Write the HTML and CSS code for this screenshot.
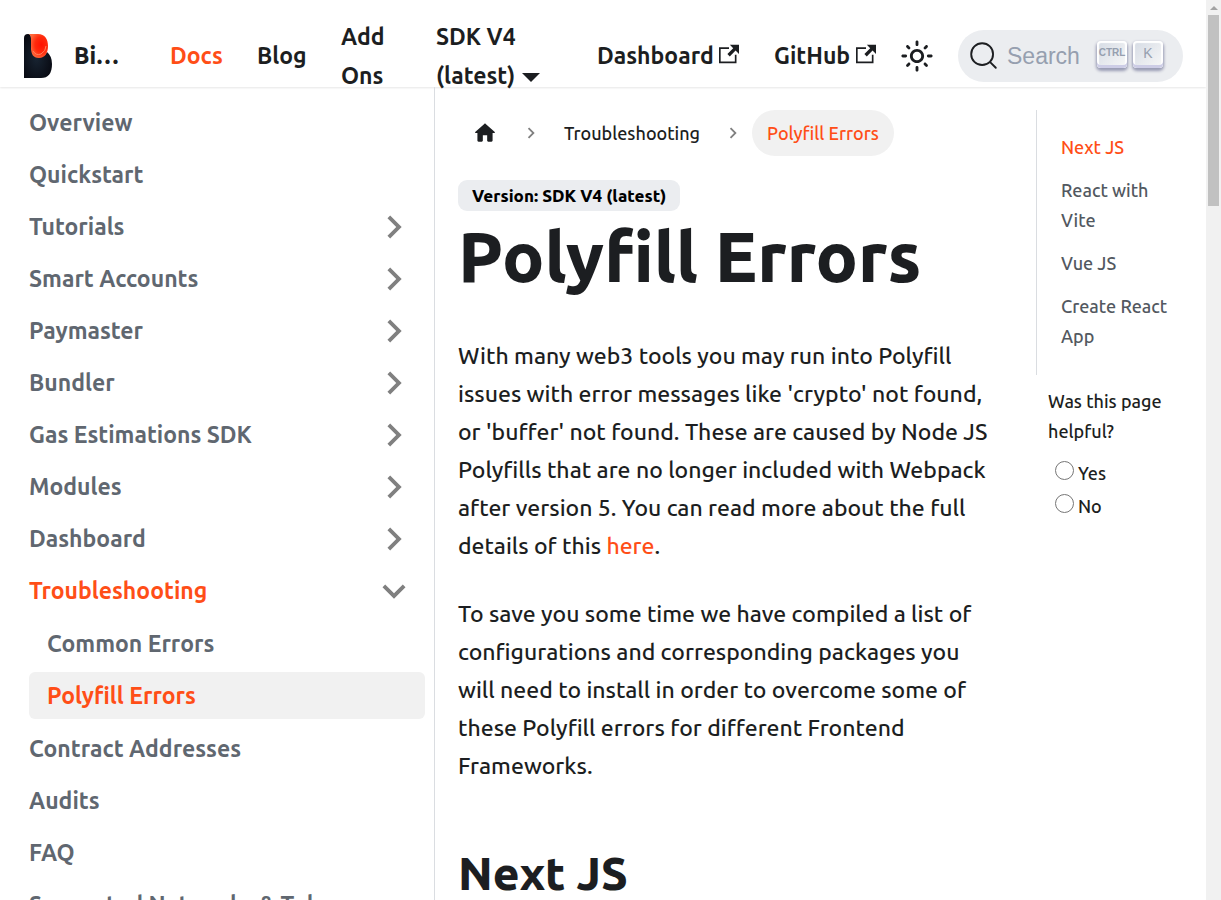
FILE: index.html
```html
<!DOCTYPE html>
<html lang="en">
<head>
<meta charset="utf-8">
<meta name="viewport" content="width=device-width, initial-scale=1">
<title>Polyfill Errors</title>
<link rel="stylesheet" href="styles.css">
</head>
<body>
<svg class="defs" aria-hidden="true">
  <symbol id="chevron" viewBox="0 0 24 24"><path d="M8.59 16.59 13.17 12 8.59 7.41 10 6l6 6-6 6z"/></symbol>
  <symbol id="external" viewBox="0 0 24 24"><path d="M21 13v10h-21v-19h12v2h-10v15h17v-8h2zm3-12h-10.988l4.035 4-6.977 7.07 2.828 2.828 6.977-7.07 4.125 4.172v-11z"/></symbol>
</svg>
<div class="page">
  <header class="navbar">
    <a class="brand" href="#">
      <svg class="logo" viewBox="0 0 28 44" aria-hidden="true">
        <defs>
          <radialGradient id="night" cx="45%" cy="55%" r="60%"><stop offset="0" stop-color="#182432"/><stop offset="1" stop-color="#080a12"/></radialGradient>
          <radialGradient id="flame" cx="65%" cy="45%" r="60%"><stop offset="0" stop-color="#ff1200"/><stop offset=".55" stop-color="#ff2a0c"/><stop offset="1" stop-color="#ff6538"/></radialGradient>
        </defs>
        <path fill="url(#night)" d="M0 44V4Q0 0 4 0q3 0 3 4v10q2 9 9 9 5-1 7-5 5 4 5 12 0 14-11 14z"/>
        <path fill="url(#flame)" d="M5 0h9c7 0 10 5 10 12s-3 12-9 12S7 20 7 13V6q0-5-2-6z"/>
        <path fill="none" stroke="#ff805c" stroke-width="1" d="M9 17q3 5 8 3 5-3 5-8"/>
      </svg>
      <b>Bi…</b>
    </a>
    <nav class="navlinks" aria-label="Main">
      <a class="docs active" href="#">Docs</a>
      <a class="blog" href="#">Blog</a>
      <a class="addons" href="#">Add Ons</a>
      <a class="sdk" href="#">SDK V4 (latest)<span class="caret"></span></a>
      <a class="dash" href="#">Dashboard <svg class="ext"><use href="#external"/></svg></a>
      <a class="github" href="#">GitHub <svg class="ext"><use href="#external"/></svg></a>
    </nav>
    <button class="theme" type="button" aria-label="Switch between dark and light mode">
      <svg viewBox="0 0 24 24"><path fill="currentColor" d="M12,9c1.65,0,3,1.35,3,3s-1.35,3-3,3s-3-1.35-3-3S10.35,9,12,9 M12,7c-2.76,0-5,2.24-5,5s2.24,5,5,5s5-2.24,5-5 S14.76,7,12,7L12,7z M2,13l2,0c0.55,0,1-0.45,1-1s-0.45-1-1-1l-2,0c-0.55,0-1,0.45-1,1S1.45,13,2,13z M20,13l2,0c0.55,0,1-0.45,1-1 s-0.45-1-1-1l-2,0c-0.55,0-1,0.45-1,1S19.45,13,20,13z M11,2v2c0,0.55,0.45,1,1,1s1-0.45,1-1V2c0-0.55-0.45-1-1-1S11,1.45,11,2z M11,20v2c0,0.55,0.45,1,1,1s1-0.45,1-1v-2c0-0.55-0.45-1-1-1C11.45,19,11,19.45,11,20z M5.99,4.58c-0.39-0.39-1.03-0.39-1.41,0 c-0.39,0.39-0.39,1.03,0,1.41l1.06,1.06c0.39,0.39,1.03,0.39,1.41,0s0.39-1.03,0-1.41L5.99,4.58z M18.36,16.95 c-0.39-0.39-1.03-0.39-1.41,0c-0.39,0.39-0.39,1.03,0,1.41l1.06,1.06c0.39,0.39,1.03,0.39,1.41,0c0.39-0.39,0.39-1.03,0-1.41 L18.36,16.95z M19.42,5.99c0.39-0.39,0.39-1.03,0-1.41c-0.39-0.39-1.03-0.39-1.41,0l-1.06,1.06c-0.39,0.39-0.39,1.03,0,1.41 s1.03,0.39,1.41,0L19.42,5.99z M7.05,18.36c0.39-0.39,0.39-1.03,0-1.41c-0.39-0.39-1.03-0.39-1.41,0l-1.06,1.06 c-0.39,0.39-0.39,1.03,0,1.41s1.03,0.39,1.41,0L7.05,18.36z"/></svg>
    </button>
    <button class="search" type="button">
      <svg viewBox="0 0 20 20" aria-hidden="true"><path d="M14.386 14.386l4.0877 4.0877-4.0877-4.0877c-2.9418 2.9419-7.7115 2.9419-10.6533 0-2.9419-2.9418-2.9419-7.7115 0-10.6533 2.9418-2.9419 7.7115-2.9419 10.6533 0 2.9419 2.9418 2.9419 7.7115 0 10.6533z" fill="none" stroke="currentColor" stroke-width="1.3" stroke-linecap="round" stroke-linejoin="round"/></svg>
      <span class="search-label">Search</span>
      <kbd class="ctrl">CTRL</kbd><kbd>K</kbd>
    </button>
  </header>
  <div class="columns">
    <nav class="sidebar" aria-label="Docs sidebar">
      <ul>
        <li><a href="#">Overview</a></li>
        <li><a href="#">Quickstart</a></li>
        <li><a href="#">Tutorials<svg><use href="#chevron"/></svg></a></li>
        <li><a href="#">Smart Accounts<svg><use href="#chevron"/></svg></a></li>
        <li><a href="#">Paymaster<svg><use href="#chevron"/></svg></a></li>
        <li><a href="#">Bundler<svg><use href="#chevron"/></svg></a></li>
        <li><a href="#">Gas Estimations SDK<svg><use href="#chevron"/></svg></a></li>
        <li><a href="#">Modules<svg><use href="#chevron"/></svg></a></li>
        <li><a href="#">Dashboard<svg><use href="#chevron"/></svg></a></li>
        <li><a class="active" href="#">Troubleshooting<svg class="open"><use href="#chevron"/></svg></a>
          <ul>
            <li><a href="#">Common Errors</a></li>
            <li><a class="active current" href="#">Polyfill Errors</a></li>
          </ul>
        </li>
        <li><a href="#">Contract Addresses</a></li>
        <li><a href="#">Audits</a></li>
        <li><a href="#">FAQ</a></li>
        <li><a href="#">Supported Networks &amp; Tokens</a></li>
      </ul>
    </nav>
    <main>
      <nav class="crumbs" aria-label="Breadcrumbs">
        <a href="#" aria-label="Home page"><svg class="home" viewBox="0 0 24 24"><path d="M10 19v-5h4v5c0 .55.45 1 1 1h3c.55 0 1-.45 1-1v-7h1.7c.46 0 .68-.57.33-.87L12.67 3.6c-.38-.34-.96-.34-1.34 0l-8.36 7.53c-.34.3-.13.87.33.87H5v7c0 .55.45 1 1 1h3c.55 0 1-.45 1-1z" fill="currentColor"/></svg></a>
        <svg class="sep"><use href="#chevron"/></svg>
        <a href="#">Troubleshooting</a>
        <svg class="sep"><use href="#chevron"/></svg>
        <span class="here">Polyfill Errors</span>
      </nav>
      <span class="badge">Version: SDK V4 (latest)</span>
      <h1>Polyfill Errors</h1>
      <p>With many web3 tools you may run into Polyfill issues with error messages like 'crypto' not found, or 'buffer' not found. These are caused by Node JS Polyfills that are no longer included with Webpack after version 5. You can read more about the full details of this <a href="#">here</a>.</p>
      <p>To save you some time we have compiled a list of configurations and corresponding packages you will need to install in order to overcome some of these Polyfill errors for different Frontend Frameworks.</p>
      <h2>Next JS</h2>
    </main>
    <aside>
      <ul class="toc">
        <li><a class="active" href="#">Next JS</a></li>
        <li><a href="#">React with Vite</a></li>
        <li><a href="#">Vue JS</a></li>
        <li><a href="#">Create React App</a></li>
      </ul>
      <fieldset class="feedback">
        <legend>Was this page helpful?</legend>
        <label><input type="radio" name="helpful">Yes</label>
        <label><input type="radio" name="helpful">No</label>
      </fieldset>
    </aside>
  </div>
</div>
<div class="scrollbar" aria-hidden="true"><span class="arrow"></span><span class="thumb"></span></div>
</body>
</html>
```
FILE: styles.css
```css
* { box-sizing: border-box; }
body {
  margin: 0;
  height: 100vh;
  display: flex;
  overflow: hidden;
  background: #fff;
  color: #1c1e21;
  font-family: Ubuntu, "Noto Sans", sans-serif;
  font-size: 23px;
  font-weight: 500;
  line-height: 38px;
}
a { color: inherit; text-decoration: none; }
ul { list-style: none; margin: 0; padding: 0; }
svg { flex: none; }
.defs { position: absolute; width: 0; height: 0; }
.active { color: #ff4e17; }

.page { flex: 1; min-width: 0; display: flex; flex-direction: column; }

.navbar {
  flex: none;
  height: 87px;
  padding: 24px 23px 0 24px;
  display: flex;
  align-items: center;
  box-shadow: 0 1px 2px rgba(0, 0, 0, .1);
  font-weight: 600;
  line-height: 39px;
}
.brand { display: flex; align-items: center; gap: 22px; width: 146px; flex: none; }
.brand b { font-weight: 800; }
.logo { width: 28px; height: 44px; }
.navlinks { display: flex; align-items: center; flex: 1; }
.navlinks a { flex: none; white-space: nowrap; }
.navlinks .docs { width: 87px; }
.navlinks .blog { width: 84px; }
.navlinks .addons { width: 95px; padding-right: 35px; white-space: normal; }
.navlinks .sdk { width: 161px; padding-right: 55px; white-space: normal; }
.navlinks .dash { width: 177px; }
.caret {
  display: inline-block;
  margin-left: 7px;
  margin-right: -24px;
  border: 9px solid transparent;
  border-top-color: currentColor;
  border-bottom: 0;
  vertical-align: 2px;
}
.ext { width: 20px; height: 20px; fill: currentColor; }
.theme { width: 46px; height: 46px; padding: 6px; margin-right: 18px; border: 0; background: none; color: inherit; }
.theme svg { width: 34px; height: 34px; display: block; }
.search {
  width: 225px;
  height: 52px;
  flex: none;
  display: flex;
  align-items: center;
  padding: 0 17px 0 11px;
  border: 0;
  border-radius: 26px;
  background: #ebedf0;
  color: #1c1e21;
  font: 23px/28px "Liberation Sans", Arial, sans-serif;
}
.search svg { width: 29px; height: 29px; }
.search-label { flex: 1; padding-left: 9px; text-align: left; color: #969faf; }
kbd {
  width: 30px;
  height: 27px;
  margin: 0 3px 3px;
  border-radius: 4px;
  background: linear-gradient(-45deg, #f8f8f8, #d5dbe4);
  box-shadow: inset 0 -3px 0 #cdcde6, inset 0 0 1px 2px #fff, 0 2px 3px 1px rgba(30, 35, 90, .4);
  color: #969faf;
  font: 14px/24px "Liberation Sans", Arial, sans-serif;
  text-align: center;
}
kbd.ctrl { font-size: 10px; font-weight: bold; }

.columns { flex: 1; min-height: 0; display: flex; overflow: hidden; }
.sidebar { flex: none; width: 435px; padding: 12px 9px 0 12px; border-right: 1px solid #dadde1; overflow: hidden; }
.sidebar ul { display: flex; flex-direction: column; gap: 5px; }
.sidebar ul ul { padding: 6px 0 1px 17px; }
.sidebar ul ul a { padding-left: 18px; }
.sidebar a {
  display: flex;
  align-items: center;
  justify-content: space-between;
  height: 47px;
  padding: 0 14px 0 17px;
  border-radius: 6px;
  color: #606770;
  font-weight: 600;
  white-space: nowrap;
}
.sidebar a.active { color: #ff4e17; }
.sidebar a.current { background: #f1f1f1; }
.sidebar svg { width: 46px; height: 46px; fill: #808080; margin-right: -6px; }
.sidebar svg.open { transform: rotate(90deg); }

main { flex: 1; min-width: 0; padding: 23px 46px 0 23px; }
.crumbs { display: flex; align-items: center; height: 46px; font-size: 18px; }
.crumbs a, .here { padding: 0 14px; line-height: 46px; border-radius: 23px; white-space: nowrap; }
.crumbs a svg { display: block; }
.home { width: 26px; height: 26px; }
.sep { width: 22px; height: 22px; margin: 0 8px; fill: #808080; }
.crumbs .here { padding: 0 15px; background: #f1f1f1; color: #ff4e17; }
.badge {
  display: block;
  width: fit-content;
  margin-top: 24px;
  padding: 0 14px;
  border-radius: 9px;
  background: #ebedf0;
  color: #000;
  font-size: 17px;
  font-weight: 800;
  line-height: 31px;
}
h1 { margin: 0 0 35px; font-size: 70px; font-weight: 800; line-height: 91px; white-space: nowrap; }
p { margin: 0 0 30px; }
p a { color: #ff4e17; }
h2 { margin: 59px 0 0; font-size: 46px; font-weight: 800; line-height: 58px; }

aside { flex: none; width: 170px; padding-top: 23px; font-size: 18px; line-height: 30px; }
.toc { display: flex; flex-direction: column; gap: 13px; padding: 22px 24px 24px; border-left: 1px solid #dadde1; color: #525860; }
.toc a { display: block; }
.feedback { margin: 11px 0 0; padding: 0 12px; border: 0; min-width: 0; }
.feedback legend { padding: 0; margin-bottom: 10px; }
.feedback label { display: flex; align-items: center; height: 33px; gap: 4px; padding-left: 7px; }
.feedback input { width: 19px; height: 19px; margin: 0 0 5px; }

.scrollbar { flex: none; width: 15px; background: #f1f1f1; display: flex; flex-direction: column; align-items: center; padding-top: 6px; }
.arrow { border: 4px solid transparent; border-bottom-color: #a3a3a3; border-top: 0; }
.thumb { width: 11px; height: 191px; margin-top: 5px; background: #c1c1c1; }
```
